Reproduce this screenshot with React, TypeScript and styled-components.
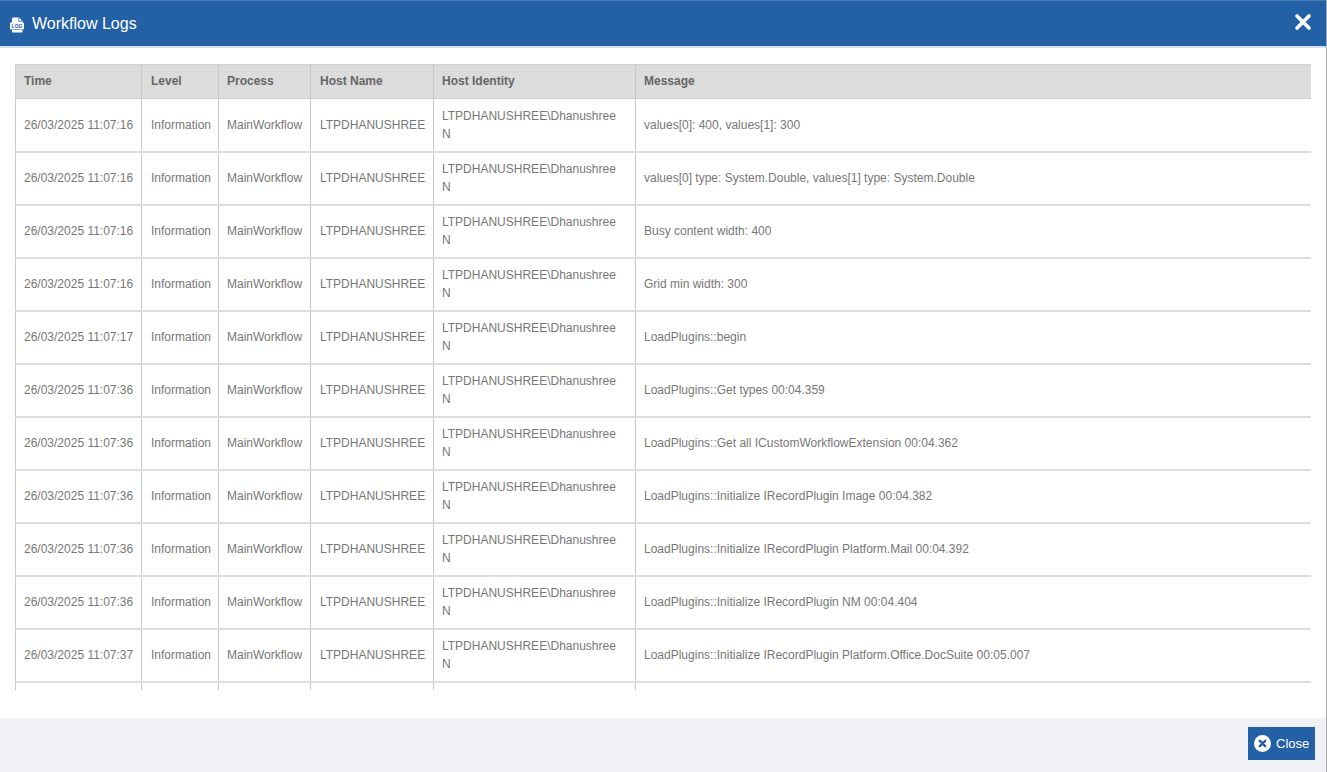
import { createGlobalStyle } from "styled-components";
import styled from "styled-components";

const logs = [
  ["26/03/2025 11:07:16", "values[0]: 400, values[1]: 300"],
  ["26/03/2025 11:07:16", "values[0] type: System.Double, values[1] type: System.Double"],
  ["26/03/2025 11:07:16", "Busy content width: 400"],
  ["26/03/2025 11:07:16", "Grid min width: 300"],
  ["26/03/2025 11:07:17", "LoadPlugins::begin"],
  ["26/03/2025 11:07:36", "LoadPlugins::Get types 00:04.359"],
  ["26/03/2025 11:07:36", "LoadPlugins::Get all ICustomWorkflowExtension 00:04.362"],
  ["26/03/2025 11:07:36", "LoadPlugins::Initialize IRecordPlugin Image 00:04.382"],
  ["26/03/2025 11:07:36", "LoadPlugins::Initialize IRecordPlugin Platform.Mail 00:04.392"],
  ["26/03/2025 11:07:36", "LoadPlugins::Initialize IRecordPlugin NM 00:04.404"],
  ["26/03/2025 11:07:37", "LoadPlugins::Initialize IRecordPlugin Platform.Office.DocSuite 00:05.007"],
];

const columns = [
  { title: "Time", width: 126 },
  { title: "Level", width: 77 },
  { title: "Process", width: 92 },
  { title: "Host Name", width: 123 },
  { title: "Host Identity", width: 202 },
  { title: "Message", width: 676 },
];

function LogFileIcon() {
  return (
    <svg width="14" height="16" viewBox="0 0 14 16">
      <path d="M2 1.500A1 1 0 0 1 3 .5h6L12.500 4v3H2z" fill="#fff" />
      <path d="M8.800 .8v3.400h3.400" fill="none" stroke="#2360a5" strokeWidth="0.8" />
      <rect x="0" y="5.500" width="14" height="7" rx="1" fill="#fff" />
      <S.IconLabel x="7" y="11">
        LOG
      </S.IconLabel>
      <path d="M2 13h10.500v1.500a1 1 0 0 1-1 1H3a1 1 0 0 1-1-1z" fill="#fff" />
    </svg>
  );
}

function CloseCross() {
  return (
    <svg width="18" height="18" viewBox="0 0 18 18">
      <path d="M3 3l12 12M15 3L3 15" stroke="#fff" strokeWidth="3.600" strokeLinecap="round" />
    </svg>
  );
}

function CircleCross() {
  return (
    <svg width="17" height="17" viewBox="0 0 17 17">
      <circle cx="8.500" cy="8.500" r="8.500" fill="#fff" />
      <path d="M5.800 5.800l5.400 5.400M11.200 5.800l-5.400 5.400" stroke="#2360a5" strokeWidth="2.400" strokeLinecap="round" />
    </svg>
  );
}

export default function App() {
  return (
    <>
      <GlobalStyle />
      <S.Dialog>
        <S.Header>
          <S.Title>
            <LogFileIcon />
            Workflow Logs
          </S.Title>
          <S.HeaderClose aria-label="Close">
            <CloseCross />
          </S.HeaderClose>
        </S.Header>
        <S.Body>
          <S.Scroll>
            <S.Table>
              <colgroup>
                {columns.map((c) => (
                  <col key={c.title} width={c.width} />
                ))}
              </colgroup>
              <thead>
                <tr>
                  {columns.map((c) => (
                    <S.Th key={c.title}>{c.title}</S.Th>
                  ))}
                </tr>
              </thead>
              <tbody>
                {logs.map(([time, message], i) => (
                  <tr key={i}>
                    <S.TimeCell>{time}</S.TimeCell>
                    <S.Td>Information</S.Td>
                    <S.Td>MainWorkflow</S.Td>
                    <S.Td>LTPDHANUSHREE</S.Td>
                    <S.Td>LTPDHANUSHREE\Dhanushree N</S.Td>
                    <S.Td>{message}</S.Td>
                  </tr>
                ))}
                {/* next row is scrolled out of view, only its cell borders show */}
                <tr>
                  {columns.map((c) => (
                    <S.Td key={c.title} />
                  ))}
                </tr>
              </tbody>
            </S.Table>
          </S.Scroll>
        </S.Body>
        <S.Footer>
          <S.CloseButton>
            <CircleCross />
            Close
          </S.CloseButton>
        </S.Footer>
      </S.Dialog>
    </>
  );
}

const GlobalStyle = createGlobalStyle`
  html, body {
    margin: 0;
    height: 100%;
    overflow: hidden;
    background: #fff;
    font-family: "Liberation Sans", Arial, sans-serif;
  }
`;

const Td = styled.td`
  height: 53px;
  box-sizing: border-box;
  padding: 7px 8px;
  border-left: 1px solid #c8c8c8;
  border-bottom: 2px solid #dcdcdc;

  &:nth-child(2),
  &:nth-child(4) {
    padding-left: 9px;
  }
`;

const S = {
  Dialog: styled.div`
    width: 1327px;
    height: 772px;
    box-sizing: border-box;
    display: flex;
    flex-direction: column;
    border-right: 1px solid #a9a9a9;
  `,
  Header: styled.header`
    height: 48px;
    box-sizing: border-box;
    flex: none;
    display: flex;
    justify-content: space-between;
    align-items: center;
    padding: 0 14px 0 10px;
    background: #2360a5;
    border-top: 1px solid #4a7db5;
    border-bottom: 2px solid #d3e0f0;
  `,
  Title: styled.h1`
    margin: 0;
    display: flex;
    align-items: center;
    gap: 8px;
    color: #fff;
    font-size: 16px;
    font-weight: 400;

    > svg {
      margin-top: 3px;
    }
  `,
  IconLabel: styled.text`
    fill: #2360a5;
    font: 700 5px "Liberation Sans", Arial, sans-serif;
    text-anchor: middle;
  `,
  HeaderClose: styled.button`
    display: flex;
    padding: 0 0 3px;
    background: transparent;
    border: none;
    cursor: pointer;
  `,
  Body: styled.main`
    flex: 1;
    min-height: 0;
    padding: 16px 15px 28px;
    background: #fff;
  `,
  Scroll: styled.div`
    height: 100%;
    overflow: hidden;
  `,
  Table: styled.table`
    width: 1296px;
    table-layout: fixed;
    border-collapse: collapse;
    font-size: 12px;
    line-height: 18px;
    color: #777;
  `,
  Th: styled.th`
    height: 34px;
    box-sizing: border-box;
    padding: 0 8px 2px;
    background: #dcdcdc;
    border: 1px solid #cfcfcf;
    border-top: 1px solid #d2d2d2;
    border-right-color: #c8c8c8;
    color: #666;
    font-weight: 700;
    text-align: left;

    &:nth-child(2),
    &:nth-child(4) {
      padding-left: 9px;
    }

    &:last-child {
      border-right: none;
    }
  `,
  Td,
  TimeCell: styled(Td)`
    white-space: nowrap;
  `,
  Footer: styled.footer`
    height: 54px;
    box-sizing: border-box;
    flex: none;
    display: flex;
    justify-content: flex-end;
    align-items: flex-start;
    padding: 9px 11px 0 0;
    background: #f0f1f6;
  `,
  CloseButton: styled.button`
    width: 67px;
    height: 33px;
    box-sizing: border-box;
    display: flex;
    align-items: center;
    gap: 5px;
    padding: 0 0 0 6px;
    background: #2360a5;
    border: none;
    color: #fff;
    font: 400 13px "Liberation Sans", Arial, sans-serif;
    cursor: pointer;
  `,
};
